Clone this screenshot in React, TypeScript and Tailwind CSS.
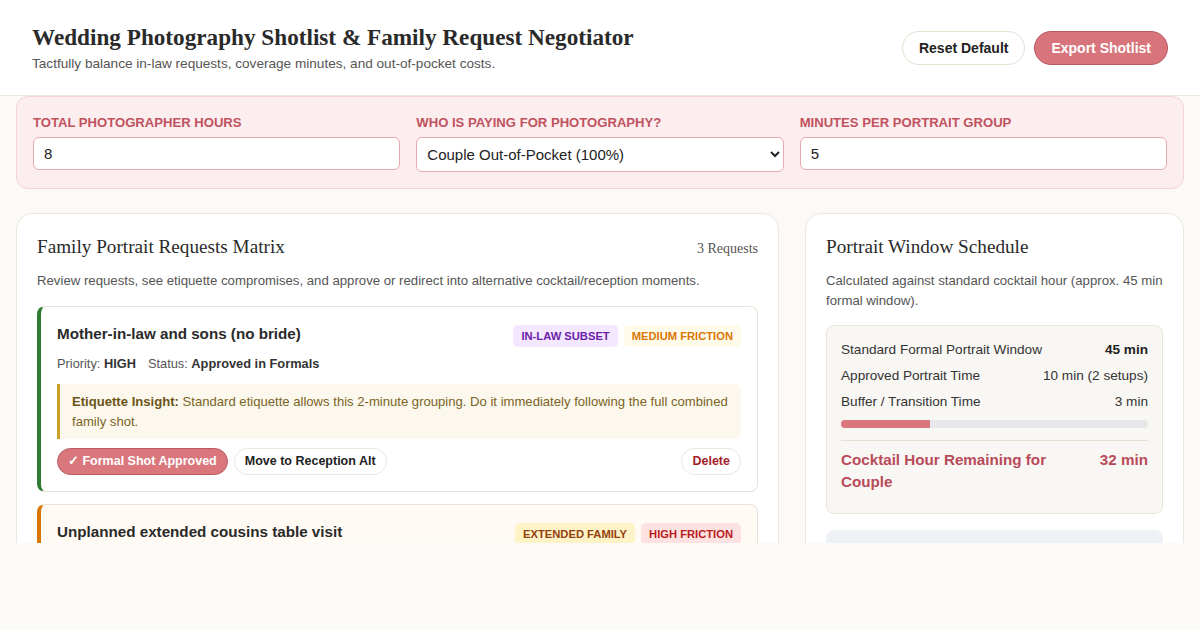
import { useState } from 'react';

type Request = {
  id: number;
  title: string;
  tags: { label: string; className: string }[];
  priority: string;
  status: string;
  insight: string;
  accent: string;
  surface: string;
  approved: boolean;
};

const requests: Request[] = [
  {
    id: 1,
    title: 'Mother-in-law and sons (no bride)',
    tags: [
      { label: 'In-Law Subset', className: 'bg-[#f3e8ff] text-[#6b21a8]' },
      { label: 'Medium Friction', className: 'bg-[#fffbeb] text-[#d97706]' },
    ],
    priority: 'HIGH',
    status: 'Approved in Formals',
    insight:
      'Standard etiquette allows this 2-minute grouping. Do it immediately following the full combined family shot.',
    accent: 'border-l-[#2e7d32]',
    surface: 'bg-white',
    approved: true,
  },
  {
    id: 2,
    title: 'Unplanned extended cousins table visit',
    tags: [
      { label: 'Extended Family', className: 'bg-[#fef3c7] text-[#92400e]' },
      { label: 'High Friction', className: 'bg-[#fee2e2] text-[#b91c1c]' },
    ],
    priority: 'MEDIUM',
    status: 'Pending Review',
    insight:
      'Large cousin groups eat into cocktail hour. Suggest capturing them during table rounds at the reception instead.',
    accent: 'border-l-[#d97706]',
    surface: 'bg-[#fffaf3]',
    approved: false,
  },
];

function RequestCard({ r }: { r: Request }) {
  return (
    <div className={`rounded-lg border border-[#e9e2d6] border-l-4 ${r.accent} ${r.surface} pl-4 pr-4 pt-4 pb-4`}>
      <div className="flex items-start justify-between gap-4">
        <h3 className="text-[15.2px] leading-5 font-bold text-[#2a2a2a] mt-px">{r.title}</h3>
        <div className="flex gap-1.5 mt-0.5">
          {r.tags.map(t => (
            <span
              key={t.label}
              className={`${t.className} rounded-[5px] px-2 h-[22px] flex items-center text-[11.2px] font-bold uppercase`}
            >
              {t.label}
            </span>
          ))}
        </div>
      </div>
      <div className="mt-2 text-[12.8px] leading-[18px] text-[#555]">
        Priority: <b className="text-[#333]">{r.priority}</b>
        <span className="ml-3">Status: </span>
        <b className="text-[#333]">{r.status}</b>
      </div>
      <div className="mt-[11px] border-l-[3px] border-[#c9a227] bg-[#fdf8ee] rounded-r-md px-3 py-2 text-[13.1px] leading-[19.5px] text-[#7a6425]">
        <b className="text-[#6b5417]">Etiquette Insight:</b> {r.insight}
      </div>
      <div className="mt-[9px] flex items-center gap-1.5">
        {r.approved ? (
          <button className="h-[27px] px-2.5 rounded-full bg-[#d9777d] border border-[#b95a63] text-white text-[12.5px] font-bold">
            ✓ Formal Shot Approved
          </button>
        ) : (
          <button className="h-[27px] px-2.5 rounded-full bg-white border border-[#ece5da] text-[#222] text-[12.5px] font-bold">
            Approve Formal Shot
          </button>
        )}
        <button className="h-[27px] px-2.5 rounded-full bg-white border border-[#ece5da] text-[#222] text-[12.5px] font-bold">
          Move to Reception Alt
        </button>
        <button className="ml-auto h-[27px] px-2.5 rounded-full bg-white border border-[#ece5da] text-[#a3212b] text-[12.5px] font-bold">
          Delete
        </button>
      </div>
    </div>
  );
}

export default function App() {
  const [hours, setHours] = useState('8');
  const [payer, setPayer] = useState('couple');
  const [minutes, setMinutes] = useState('5');

  const windowMin = 45;
  const approved = 10;
  const buffer = 3;
  const used = approved + buffer;
  const remaining = windowMin - used;

  return (
    <div className="min-h-screen bg-[#fcfaf6] font-['Liberation_Sans',Arial,sans-serif] text-[#222]">
      {/* Header */}
      <header className="bg-white border-b border-[#eee6dc] px-8 pt-[22px] pb-[21px] flex items-center justify-between">
        <div>
          <h1 className="font-['Liberation_Serif','Times_New_Roman',serif] font-bold text-[23.2px] leading-[30px] text-[#2a2a2a]">
            Wedding Photography Shotlist &amp; Family Request Negotiator
          </h1>
          <p className="mt-[2px] text-[13.6px] leading-5 text-[#555]">
            Tactfully balance in-law requests, coverage minutes, and out-of-pocket costs.
          </p>
        </div>
        <div className="flex items-center gap-[9px]">
          <button className="h-[34px] px-4 rounded-full bg-white border border-[#e6dfd2] text-sm font-bold text-[#222]">
            Reset Default
          </button>
          <button className="h-[34px] px-4 rounded-full bg-[#d8757c] border border-[#b95a63] text-sm font-bold text-white">
            Export Shotlist
          </button>
        </div>
      </header>

      {/* Settings */}
      <section className="mx-4 rounded-xl border border-[#f3d3d6] bg-[#fcedee] p-4 grid grid-cols-3 gap-4 items-start">
        <label className="block">
          <span className="block text-[13.1px] leading-[18px] font-bold uppercase text-[#c0535f] mt-px mb-[5px]">
            Total Photographer Hours
          </span>
          <input
            value={hours}
            onChange={e => setHours(e.target.value)}
            className="w-full h-[33px] px-2.5 rounded-md border border-[#e8aab1] bg-white text-[15px] text-[#222] outline-none"
          />
        </label>
        <label className="block">
          <span className="block text-[13.1px] leading-[18px] font-bold uppercase text-[#c0535f] mt-px mb-[5px]">
            Who is paying for photography?
          </span>
          <select
            value={payer}
            onChange={e => setPayer(e.target.value)}
            className="w-full h-[35px] px-1.5 rounded-md border border-[#e8aab1] bg-white text-[15px] text-[#222] outline-none"
          >
            <option value="couple">Couple Out-of-Pocket (100%)</option>
            <option value="split">Split with Parents (50%)</option>
            <option value="parents">Parents Paying (100%)</option>
          </select>
        </label>
        <label className="block">
          <span className="block text-[13.1px] leading-[18px] font-bold uppercase text-[#c0535f] mt-px mb-[5px]">
            Minutes per Portrait Group
          </span>
          <input
            value={minutes}
            onChange={e => setMinutes(e.target.value)}
            className="w-full h-[33px] px-2.5 rounded-md border border-[#e8aab1] bg-white text-[15px] text-[#222] outline-none"
          />
        </label>
      </section>

      {/* Main columns */}
      <main className="mt-6 px-4 h-[330px] overflow-hidden grid grid-cols-[1fr_379px] gap-[26px] items-start">
        <div className="rounded-2xl border border-[#ece6dc] bg-white p-5">
          <div className="flex items-baseline justify-between">
            <h2 className="font-['Liberation_Serif','Times_New_Roman',serif] text-[19.2px] leading-[26px] text-[#2a2a2a]">
              Family Portrait Requests Matrix
            </h2>
            <span className="font-['Liberation_Serif','Times_New_Roman',serif] text-[14px] text-[#555]">
              3 Requests
            </span>
          </div>
          <p className="mt-[11px] text-[13.2px] leading-5 text-[#555]">
            Review requests, see etiquette compromises, and approve or redirect into alternative cocktail/reception moments.
          </p>
          <div className="mt-[15px] flex flex-col gap-3">
            {requests.map(r => (
              <RequestCard key={r.id} r={r} />
            ))}
          </div>
        </div>

        <div className="rounded-2xl border border-[#ece6dc] bg-white p-5">
          <h2 className="font-['Liberation_Serif','Times_New_Roman',serif] text-[19.2px] leading-[26px] text-[#2a2a2a]">
            Portrait Window Schedule
          </h2>
          <p className="mt-[11px] text-[13.2px] leading-[19.5px] text-[#555]">
            Calculated against standard cocktail hour (approx. 45 min formal window).
          </p>
          <div className="mt-[15px] rounded-lg border border-[#ebe4d8] bg-[#f9f7f3] px-3.5 pt-3.5 pb-5">
            <div className="flex flex-col gap-1.5 text-[13.6px] leading-5 text-[#333]">
              <div className="flex justify-between">
                <span>Standard Formal Portrait Window</span>
                <b className="text-[#222]">{windowMin} min</b>
              </div>
              <div className="flex justify-between">
                <span>Approved Portrait Time</span>
                <span>{approved} min (2 setups)</span>
              </div>
              <div className="flex justify-between">
                <span>Buffer / Transition Time</span>
                <span>{buffer} min</span>
              </div>
            </div>
            <div className="mt-2 h-2 rounded-full bg-[#e5e7eb] overflow-hidden">
              <div className="h-full bg-[#d9777d]" style={{ width: `${(used / windowMin) * 100}%` }} />
            </div>
            <div className="mt-3 border-t border-[#e8dfd2] pt-2 flex items-start justify-between gap-4 text-[15.2px] leading-[22px] font-bold text-[#b94a5a]">
              <span className="max-w-[230px]">Cocktail Hour Remaining for Couple</span>
              <span className="whitespace-nowrap">{remaining} min</span>
            </div>
          </div>
          <div className="mt-4 h-24 rounded-lg bg-[#eef1f6]" />
        </div>
      </main>
    </div>
  );
}
